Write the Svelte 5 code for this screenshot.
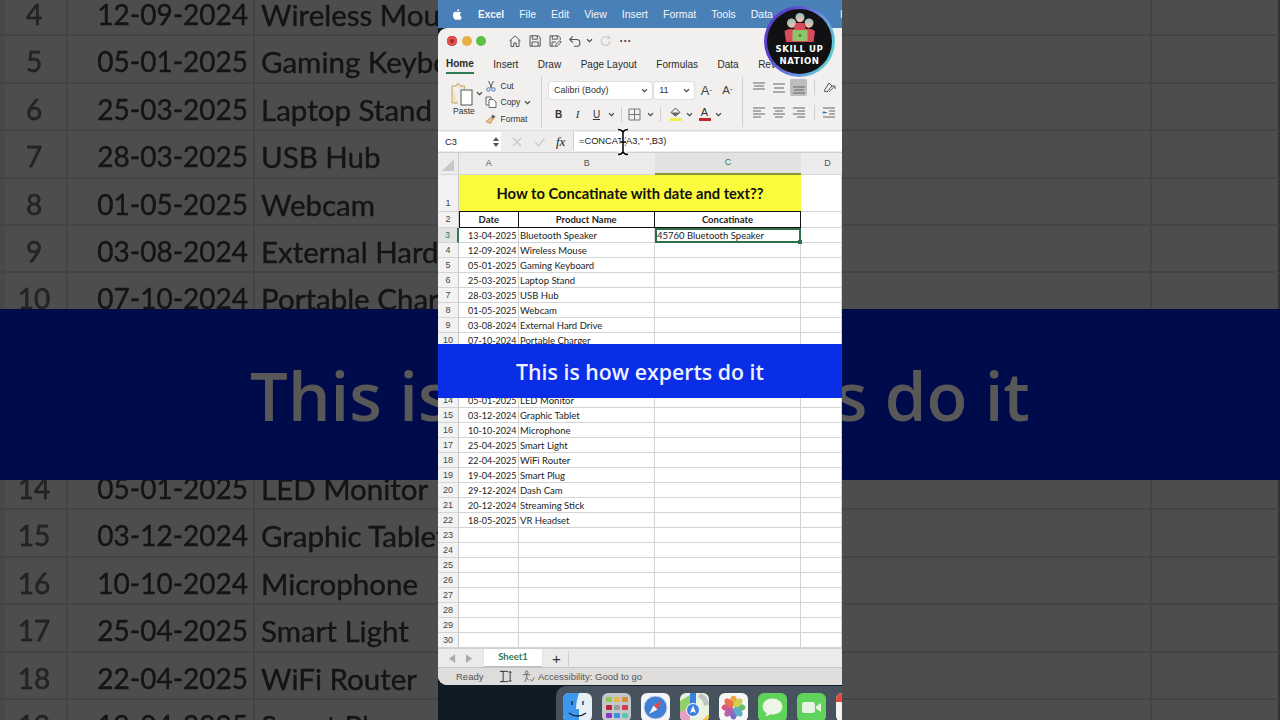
<script>
  const topRows = [
    [4, '12-09-2024', 'Wireless Mouse'],
    [5, '05-01-2025', 'Gaming Keyboard'],
    [6, '25-03-2025', 'Laptop Stand'],
    [7, '28-03-2025', 'USB Hub'],
    [8, '01-05-2025', 'Webcam'],
    [9, '03-08-2024', 'External Hard Drive'],
    [10, '07-10-2024', 'Portable Charger']
  ];
  const bottomRows = [
    [14, '05-01-2025', 'LED Monitor'],
    [15, '03-12-2024', 'Graphic Tablet'],
    [16, '10-10-2024', 'Microphone'],
    [17, '25-04-2025', 'Smart Light'],
    [18, '22-04-2025', 'WiFi Router'],
    [19, '19-04-2025', 'Smart Plug']
  ];
  const data = {
    3: ['13-04-2025', 'Bluetooth Speaker'],
    4: ['12-09-2024', 'Wireless Mouse'],
    5: ['05-01-2025', 'Gaming Keyboard'],
    6: ['25-03-2025', 'Laptop Stand'],
    7: ['28-03-2025', 'USB Hub'],
    8: ['01-05-2025', 'Webcam'],
    9: ['03-08-2024', 'External Hard Drive'],
    10: ['07-10-2024', 'Portable Charger'],
    14: ['05-01-2025', 'LED Monitor'],
    15: ['03-12-2024', 'Graphic Tablet'],
    16: ['10-10-2024', 'Microphone'],
    17: ['25-04-2025', 'Smart Light'],
    18: ['22-04-2025', 'WiFi Router'],
    19: ['19-04-2025', 'Smart Plug'],
    20: ['29-12-2024', 'Dash Cam'],
    21: ['20-12-2024', 'Streaming Stick'],
    22: ['18-05-2025', 'VR Headset']
  };
  const rowNums = Array.from({ length: 28 }, (_, i) => i + 3).filter((n) => n < 11 || n > 13);
  const hiddenRows = [11, 12, 13];
  const menu = ['File', 'Edit', 'View', 'Insert', 'Format', 'Tools', 'Data'];
  const tabs = ['Insert', 'Draw', 'Page Layout', 'Formulas', 'Data', 'Rev'];
</script>

{#snippet chevron()}
  <svg class="chev" viewBox="0 0 8 6" width="7" height="5"><path d="M1 1.5 4 4.5 7 1.5" fill="none" stroke="#444" stroke-width="1.3"/></svg>
{/snippet}

{#snippet alignLines(lines)}
  <svg viewBox="0 0 16 14" width="16" height="14">
    {#each lines as l}
      <path d={`M${l[0]} ${l[1]}H${l[2]}`} stroke="#666" stroke-width="1.1" fill="none"/>
    {/each}
  </svg>
{/snippet}

{#snippet sheetRow(n)}
  <div class="row">
    <div class="rh" class:rsel={n === 3}>{n}</div>
    <div class="cell date">{data[n] ? data[n][0] : ''}</div>
    <div class="cell">{data[n] ? data[n][1] : ''}</div>
    <div class="cell" class:active={n === 3}>{n === 3 ? '45760 Bluetooth Speaker' : ''}</div>
    <div class="cell"></div>
  </div>
{/snippet}

<div class="page">
  <div class="backdrop">
    <div class="bd-top">
      {#each topRows as r}
        <div class="bd-row">
          <span class="bd-num">{r[0]}</span>
          <span class="bd-date">{r[1]}</span>
          <span class="bd-name">{r[2]}</span>
          <span class="bd-c"></span>
          <span class="bd-d"></span>
        </div>
      {/each}
    </div>
    <div class="bd-banner"><span>This is how experts do it</span></div>
    <div class="bd-bottom">
      {#each bottomRows as r}
        <div class="bd-row">
          <span class="bd-num">{r[0]}</span>
          <span class="bd-date">{r[1]}</span>
          <span class="bd-name">{r[2]}</span>
          <span class="bd-c"></span>
          <span class="bd-d"></span>
        </div>
      {/each}
    </div>
  </div>

  <div class="video">
    <div class="menubar">
      <svg class="apple" viewBox="0 0 14 16" width="11" height="13"><path fill="#fff" d="M10.2 8.4c0-1.6 1.3-2.4 1.4-2.5-.8-1.1-2-1.3-2.4-1.3-1-.1-2 .6-2.5.6s-1.3-.6-2.2-.6C3.4 4.6 2.3 5.3 1.7 6.3.5 8.4 1.4 11.5 2.6 13.2c.6.8 1.3 1.8 2.2 1.8s1.2-.6 2.3-.6 1.4.6 2.3.6 1.5-.8 2.1-1.7c.7-1 .9-1.9 1-2-.1 0-2.300-.8-2.300-2.900ZM8.500 3.300c.5-.6.8-1.400.7-2.300-.7 0-1.600.5-2.100 1.100-.5.5-.9 1.400-.8 2.200.8.100 1.600-.4 2.200-1Z"/></svg>
      <b>Excel</b>
      {#each menu as m}<span>{m}</span>{/each}
      <span class="menu-h">H</span>
    </div>

    <div class="window">
      <div class="titlebar">
        <span class="light red"></span><span class="light amber"></span><span class="light green"></span>
        <div class="qat">
          <svg viewBox="0 0 14 14" width="14" height="14"><path d="M1.5 7 7 1.8 12.5 7M3 6v6.500h2.800V9h2.400v3.500H11V6" fill="none" stroke="#555" stroke-width="1"/></svg>
          <svg viewBox="0 0 14 14" width="14" height="14"><path d="M2 1.800h8.500l1.700 1.700v8.700H2zM4.300 2v3.200h5V2M4 12V8h6.200v4" fill="none" stroke="#555" stroke-width="1"/></svg>
          <svg viewBox="0 0 14 14" width="14" height="14"><path d="M6.500 12.200H2V1.800h8.300l1.900 1.900v2.500M4.300 2v3.200h5V2M4 12V8h4M7.500 12.500l.4-2 4-3.700 1.300 1.400-3.900 3.800z" fill="none" stroke="#555" stroke-width="1"/></svg>
          <svg viewBox="0 0 14 14" width="14" height="14"><path d="M2 5.500h6.500a3.300 3.300 0 0 1 0 6.800H6M4.800 2.300 1.700 5.500l3.100 3" fill="none" stroke="#555" stroke-width="1.100"/></svg>
          <span class="qat-chev">{@render chevron()}</span>
          <svg viewBox="0 0 14 14" width="13" height="13"><path d="M10.800 4.200A4.800 4.800 0 1 0 12 8M11.200 1.500v3h-3" fill="none" stroke="#c4c4c4" stroke-width="1.100"/></svg>
          <span class="dots">···</span>
        </div>
      </div>

      <div class="tabs">
        <span class="tab active">Home</span>
        {#each tabs as t}<span class="tab">{t}</span>{/each}
      </div>

      <div class="ribbon">
        <div class="group clip">
          <div class="paste">
            <div class="paste-top">
              <svg viewBox="0 0 24 25" width="24" height="25">
                <path d="M2 5h4l1-2h2.500l1 2h4v3M2 5v17h6" fill="#f1e3c4" stroke="#c6a86a" stroke-width="1"/>
                <rect x="11" y="9" width="11" height="15" fill="#fff" stroke="#555" stroke-width="1"/>
              </svg>
              {@render chevron()}
            </div>
            <span>Paste</span>
          </div>
          <div class="clip-list">
            <div class="clip-item">
              <svg viewBox="0 0 12 12" width="12" height="12"><path d="M3.500 1 7 8M8.500 1 5 8" stroke="#555" fill="none"/><circle cx="3.500" cy="9.500" r="1.700" fill="none" stroke="#3f78b5"/><circle cx="8.500" cy="9.500" r="1.700" fill="none" stroke="#3f78b5"/></svg>
              <span>Cut</span>
            </div>
            <div class="clip-item">
              <svg viewBox="0 0 12 12" width="12" height="12"><path d="M1 1h5v2M1 1v8h2.500M4 3.500h4.500L11 6v5.500H4z" fill="#fff" stroke="#555" stroke-width=".9"/></svg>
              <span>Copy</span>
              {@render chevron()}
            </div>
            <div class="clip-item">
              <svg viewBox="0 0 12 12" width="12" height="12"><path d="M7.500 1.500 10.500 3.500 8.500 6 6 4z" fill="#666"/><path d="M6 4.500 8 6 5.500 10.500 1 8.500z" fill="#eec28f" stroke="#c9853f" stroke-width=".8"/></svg>
              <span>Format</span>
            </div>
          </div>
        </div>
        <i class="sep tall"></i>
        <div class="group font">
          <div class="font-top">
            <div class="select font-name"><span>Calibri (Body)</span>{@render chevron()}</div>
            <div class="select font-size"><span>11</span>{@render chevron()}</div>
            <span class="grow">A<small>ˆ</small></span>
            <span class="shrink">A<small>ˇ</small></span>
          </div>
          <div class="font-bottom">
            <span class="fmt b">B</span>
            <span class="fmt i">I</span>
            <span class="fmt u">U</span>
            {@render chevron()}
            <i class="sep short"></i>
            <svg viewBox="0 0 13 13" width="13" height="13"><path d="M1 1h11v11H1zM6.500 1v11M1 6.500h11" fill="none" stroke="#777"/></svg>
            {@render chevron()}
            <i class="sep short"></i>
            <div class="colorbtn first">
              <svg viewBox="0 0 13 10" width="13" height="10"><path d="M6.500 1 11 5.500 6.500 9 2 5.500z" fill="none" stroke="#555"/><path d="M2 5.500h9L6.500 9z" fill="#666"/></svg>
              <u class="fill-y"></u>
            </div>
            {@render chevron()}
            <div class="colorbtn">
              <span class="a-red">A</span>
              <u class="fill-r"></u>
            </div>
            {@render chevron()}
          </div>
        </div>
        <i class="sep tall"></i>
        <div class="group align">
          <div class="align-row">
            <span class="al">{@render alignLines([[2, 2, 14], [3, 5, 13], [2, 8, 14]])}</span>
            <span class="al">{@render alignLines([[2, 3, 14], [3, 7, 13], [2, 11, 14]])}</span>
            <span class="al on">{@render alignLines([[2, 6, 14], [3, 9, 13], [2, 12, 14]])}</span>
            <i class="sep short"></i>
            <svg class="wrap" viewBox="0 0 16 14" width="16" height="14"><path d="M3 10 8 2l3 3-5 6zM14 5v3M14 5h-3" fill="none" stroke="#555"/><path d="M8 11l6-6" stroke="#3f78b5" fill="none"/></svg>
          </div>
          <div class="align-row">
            <span class="al">{@render alignLines([[2, 2, 14], [2, 5, 10], [2, 8, 14], [2, 11, 10]])}</span>
            <span class="al">{@render alignLines([[2, 2, 14], [4, 5, 12], [2, 8, 14], [4, 11, 12]])}</span>
            <span class="al">{@render alignLines([[2, 2, 14], [6, 5, 14], [2, 8, 14], [6, 11, 14]])}</span>
            <i class="sep short"></i>
            <svg class="wrap" viewBox="0 0 16 14" width="16" height="14"><path d="M2 2h12M8 5h6M8 8h6M2 11h12" stroke="#666" fill="none"/><path d="M6 6.500H2M3.500 5 2 6.500 3.500 8" stroke="#3f78b5" fill="none"/></svg>
          </div>
        </div>
      </div>

      <div class="formula">
        <div class="namebox"><span>C3</span><span class="stepper"><i></i><i class="dn"></i></span></div>
        <svg class="fx-x" viewBox="0 0 12 12" width="12" height="12"><path d="M2 2l8 8M10 2l-8 8" stroke="#c9c9c9" stroke-width="1.300"/></svg>
        <svg class="fx-v" viewBox="0 0 12 12" width="12" height="12"><path d="M1.500 6.500 4.500 10 10.500 2.500" fill="none" stroke="#c9c9c9" stroke-width="1.300"/></svg>
        <span class="fx">fx</span>
        <div class="fbox">=CONCAT(A3," ",B3)</div>
      </div>

      <div class="sheet">
        <div class="row colhead">
          <div class="corner"><svg viewBox="0 0 14 14" width="14" height="14"><path d="M13 1v12H1z" fill="#c9c9c9"/></svg></div>
          <div class="ch">A</div>
          <div class="ch">B</div>
          <div class="ch sel">C</div>
          <div class="ch chd">D</div>
        </div>
        <div class="row r1">
          <div class="rh">1</div>
          <div class="title">How to Concatinate with date and text??</div>
          <div class="cell"></div>
        </div>
        <div class="row r2">
          <div class="rh">2</div>
          <div class="th">Date</div>
          <div class="th">Product Name</div>
          <div class="th">Concatinate</div>
          <div class="cell"></div>
        </div>
        {#each rowNums.filter((n) => n < 11) as n}
          {@render sheetRow(n)}
        {/each}
        <div class="under-banner">
          {#each hiddenRows as n}
            <div class="row"><div class="rh"></div><div class="cell"></div><div class="cell"></div><div class="cell"></div><div class="cell"></div></div>
          {/each}
        </div>
        {#each rowNums.filter((n) => n > 13) as n}
          {@render sheetRow(n)}
        {/each}
      </div>

      <div class="sheetbar">
        <svg viewBox="0 0 8 10" width="7" height="9"><path d="M7 0v10L0 5z" fill="#aaa"/></svg>
        <svg viewBox="0 0 8 10" width="7" height="9"><path d="M0 0v10l7-5z" fill="#aaa"/></svg>
        <div class="sheettab">Sheet1</div>
        <span class="plus">+</span>
        <i class="sep bar"></i>
      </div>

      <div class="status">
        <span class="ready">Ready</span>
        <svg viewBox="0 0 14 14" width="13" height="13"><path d="M1 1.500h9M1 12.500h9M2.500 1.500h2v11h-2M12 1.500v11M10.500 3 12 1.500 13.500 3M10.500 11l1.500 1.500 1.500-1.500" fill="none" stroke="#333"/></svg>
        <svg class="acc" viewBox="0 0 14 14" width="13" height="13"><circle cx="5" cy="2.500" r="1.500" fill="none" stroke="#666"/><path d="M1 5h8M5 5v3l-2 5M5 8l2 3M9 10l1.500 2 3-4" fill="none" stroke="#666"/></svg>
        <span>Accessibility: Good to go</span>
      </div>
    </div>

    <div class="desktop">
      <div class="dock">
        <svg class="app" viewBox="0 0 29 29"><rect width="29" height="29" rx="6" fill="#e6eef6"/><path d="M6 0h10c-2 6-3 11-3 16h3v13H6a6 6 0 0 1-6-6V6a6 6 0 0 1 6-6Z" fill="#3e97ef"/><path d="M9 8v4M20 8v4M6 20c5 4 12 4 17 0" stroke="#1a2433" stroke-width="1.300" fill="none"/></svg>
        <svg class="app" viewBox="0 0 29 29"><rect width="29" height="29" rx="6" fill="#c4c7ca"/><rect x="4" y="4" width="6" height="5" rx="1" fill="#8bc75a"/><rect x="12" y="4" width="6" height="5" rx="1" fill="#e8b945"/><rect x="20" y="4" width="6" height="5" rx="1" fill="#d98a3a"/><rect x="4" y="12" width="6" height="5" rx="1" fill="#b8243a"/><rect x="12" y="12" width="6" height="5" rx="1" fill="#9a9da2"/><rect x="20" y="12" width="6" height="5" rx="1" fill="#d33d4a"/><rect x="4" y="20" width="6" height="5" rx="1" fill="#8a34c8"/><rect x="12" y="20" width="6" height="5" rx="1" fill="#3d8fe0"/><rect x="20" y="20" width="6" height="5" rx="1" fill="#5ac8b0"/></svg>
        <svg class="app" viewBox="0 0 29 29"><rect width="29" height="29" rx="6" fill="#f4f5f6"/><circle cx="14.500" cy="14.500" r="11.500" fill="#3f80d6" stroke="#cfd8e2"/><path d="M21 8 12.500 12.500 16.500 16.500z" fill="#e5493f"/><path d="M8 21 12.500 12.500 16.500 16.500z" fill="#f2f2f2"/></svg>
        <svg class="app" viewBox="0 0 29 29"><rect width="29" height="29" rx="6" fill="#e9f1df"/><path d="M0 8 10 2v27H6a6 6 0 0 1-6-6z" fill="#8fd16a"/><path d="M0 19l10-4v14H6a6 6 0 0 1-6-6z" fill="#e6a0c6"/><path d="M10 0h6v14h-6z" fill="#3d7fe0"/><path d="M20 0c6 2 9 7 9 12l-5 1c0-4-2-7-6-9z" fill="#bfc3c5"/><path d="M20 29l9-8v2a6 6 0 0 1-6 6z" fill="#f2c24a"/><circle cx="13" cy="17" r="6.500" fill="#3d7fe0" stroke="#fff"/><path d="M13 12.500 16 20l-3-1.500L10 20z" fill="#fff"/></svg>
        <svg class="app" viewBox="0 0 29 29"><rect width="29" height="29" rx="6" fill="#f6f6f6"/><g opacity=".92"><ellipse cx="14.500" cy="8" rx="3.500" ry="5.500" fill="#f0a030"/><ellipse cx="14.500" cy="21" rx="3.500" ry="5.500" fill="#6a62c4"/><ellipse cx="8" cy="14.500" rx="5.500" ry="3.500" fill="#d94a78"/><ellipse cx="21" cy="14.500" rx="5.500" ry="3.500" fill="#58b860"/><ellipse cx="10" cy="10" rx="5.500" ry="3.500" fill="#e46a40" transform="rotate(45 10 10)"/><ellipse cx="19" cy="10" rx="5.500" ry="3.500" fill="#c8cc48" transform="rotate(-45 19 10)"/><ellipse cx="10" cy="19" rx="5.500" ry="3.500" fill="#b450a8" transform="rotate(-45 10 19)"/><ellipse cx="19" cy="19" rx="5.500" ry="3.500" fill="#50a8c8" transform="rotate(45 19 19)"/></g></svg>
        <svg class="app" viewBox="0 0 29 29"><rect width="29" height="29" rx="6" fill="#5fd35c"/><ellipse cx="14.500" cy="13.500" rx="10" ry="8" fill="#eef5e6"/><path d="M9 18c0 3-1 4-2 5 3 0 5-1 6-3z" fill="#eef5e6"/></svg>
        <svg class="app" viewBox="0 0 29 29"><rect width="29" height="29" rx="6" fill="#5fd35c"/><rect x="5" y="9" width="13" height="11" rx="2.500" fill="#e8f2e0"/><path d="M19 13.500 24 10v9l-5-3.500z" fill="#e8f2e0"/></svg>
        <svg class="app" viewBox="0 0 29 29"><rect width="29" height="29" rx="6" fill="#f4f4f4"/><path d="M0 9V6a6 6 0 0 1 6-6h17a6 6 0 0 1 6 6v3z" fill="#e04a3f"/></svg>
      </div>
    </div>

    <div class="logo">
      <svg class="people" viewBox="0 0 34 31" width="34" height="31">
        <circle cx="8.500" cy="11" r="4.500" fill="#a9c4bf"/>
        <circle cx="17" cy="5.500" r="4.500" fill="#a9c4bf"/>
        <circle cx="26" cy="11" r="4.500" fill="#a9c4bf"/>
        <path d="M3 30 1.500 19q5-3 9-1.500L13 11h8l2 6q5-1 9 2l-1.500 11z" fill="#d94a5a"/>
        <circle cx="9" cy="13" r="2.700" fill="#efb9a8"/>
        <circle cx="17" cy="7.500" r="2.700" fill="#efb9a8"/>
        <circle cx="25.500" cy="13" r="2.700" fill="#efb9a8"/>
        <rect x="9.500" y="18" width="15" height="11" fill="#8ec46a"/>
        <circle cx="17" cy="23.500" r="1.300" fill="#3f7a3f"/>
      </svg>
      <span class="l1">SKILL UP</span>
      <span class="l2">NATION</span>
    </div>

    <svg class="ibeam" viewBox="0 0 14 28" width="14" height="28">
      <path d="M2 1.500c3 0 4 1 5 2.500 1-1.500 2-2.500 5-2.500M7 4v20M2 26.500c3 0 4-1 5-2.500 1 1.500 2 2.500 5 2.500M4 14h6" fill="none" stroke="#fff" stroke-width="3.500"/>
      <path d="M2 1.500c3 0 4 1 5 2.500 1-1.500 2-2.500 5-2.500M7 4v20M2 26.500c3 0 4-1 5-2.500 1 1.500 2 2.500 5 2.500M4 14h6" fill="none" stroke="#000" stroke-width="1.500"/>
    </svg>

    <div class="banner"><span>This is how experts do it</span></div>
  </div>
</div>

<style>
  :global(body) { margin: 0; background: #4d4d4d; }
  .page {
    position: relative;
    width: 1280px;
    height: 720px;
    overflow: hidden;
    display: flex;
    justify-content: center;
    background: #4d4d4d;
    font-family: "Liberation Sans", sans-serif;
  }

  .backdrop {
    position: absolute;
    inset: 0;
    display: flex;
    flex-direction: column;
    font-family: Lato, sans-serif;
    color: #141414;
    filter: blur(.6px);
  }
  .bd-top { height: 309px; overflow: hidden; flex: none; }
  .bd-top .bd-row:first-child { margin-top: -11px; }
  .bd-bottom { flex: 1; overflow: hidden; }
  .bd-bottom .bd-row:first-child { margin-top: -17px; }
  .bd-row {
    display: grid;
    grid-template-columns: 68px 187px 183px 714px 126px;
    height: 47.4px;
    box-sizing: border-box;
    border-bottom: 2px solid #444;
    border-right: 2px solid #333;
    font-size: 28px;
    line-height: 39px;
    box-shadow: inset 5px 0 0 #484848;
    -webkit-text-stroke: .4px #141414;
  }
  .bd-row span { padding-top: 6px; box-sizing: border-box; }
  .bd-num { text-align: center; color: #262626; padding-left: 2px; border-right: 2px solid #444; }
  .bd-date { text-align: right; padding-right: 5px; border-right: 2px solid #444; }
  .bd-name { padding-left: 6px; overflow: hidden; white-space: nowrap; font-size: 29.500px; }
  .bd-c { border-right: 2px solid #444; }
  .bd-banner {
    height: 171px;
    flex: none;
    background: #000b4b;
    display: flex;
    align-items: center;
    justify-content: center;
    font-family: "Open Sans", sans-serif;
    font-weight: 600;
    font-size: 67px;
    color: #585858;
    white-space: nowrap;
  }

  .video {
    position: relative;
    width: 404px;
    height: 720px;
    flex: none;
    overflow: hidden;
    display: flex;
    flex-direction: column;
    background: #0f1a22;
  }

  .menubar {
    height: 28px;
    flex: none;
    background: #4a80b8;
    color: #f2f6fa;
    display: flex;
    align-items: center;
    font-size: 10.500px;
    padding-left: 14px;
    gap: 15px;
    white-space: nowrap;
  }
  .menubar > * { flex: none; }
  .menubar b { font-weight: 700; font-size: 10px; }
  .menu-h { margin-left: 52px; }

  .window {
    flex: none;
    height: 657px;
    background: #f1f0ef;
    border-radius: 9px 0 0 9px;
    display: flex;
    flex-direction: column;
    overflow: hidden;
  }
  .titlebar {
    height: 25px;
    flex: none;
    display: flex;
    align-items: center;
    padding-left: 9px;
    gap: 4.5px;
  }
  .light { width: 10px; height: 10px; border-radius: 50%; flex: none; }
  .red { background: #d9403f; box-shadow: inset 0 0 0 3px #e0524c, inset 0 0 0 5px #9c2b2b; }
  .amber { background: #e8b044; }
  .green { background: #5cc046; }
  .qat { display: flex; align-items: center; gap: 6px; margin-left: 17px; }
  .qat-chev { display: flex; margin-left: -2px; }
  .dots { color: #444; font-size: 12px; font-weight: 700; margin-left: 2px; line-height: 10px; }

  .tabs {
    height: 21px;
    flex: none;
    display: flex;
    align-items: stretch;
    padding-left: 8px;
    gap: 19.5px;
    font-size: 10px;
    color: #2a2a2a;
    white-space: nowrap;
  }
  .tab { display: flex; align-items: center; padding-top: 1px; box-sizing: border-box; }
  .tab.active { font-weight: 700; border-bottom: 2px solid #2f7a52; }

  .ribbon {
    height: 57px;
    flex: none;
    display: flex;
    align-items: center;
    border-bottom: 1px solid #dcdcdc;
    box-sizing: border-box;
    color: #333;
  }
  .sep { display: block; background: #cfcfcf; width: 1px; flex: none; }
  .sep.tall { height: 50px; }
  .sep.short { height: 15px; }
  .group { flex: none; height: 100%; }
  .clip { width: 103px; display: flex; padding-left: 12px; box-sizing: border-box; gap: 3px; }
  .paste { display: flex; flex-direction: column; align-items: flex-start; padding-top: 7px; font-size: 8.500px; }
  .paste-top { display: flex; align-items: center; gap: 2px; height: 25px; }
  .paste span { margin-left: 3px; line-height: 11px; }
  .clip-list { display: flex; flex-direction: column; padding-top: 5px; gap: 3.500px; margin-left: -1px; }
  .clip-item { display: flex; align-items: center; gap: 3.500px; height: 13px; font-size: 8.500px; white-space: nowrap; }

  .font { width: 200px; padding-left: 7px; box-sizing: border-box; display: flex; flex-direction: column; gap: 6px; padding-top: 7px; }
  .font-top { display: flex; align-items: center; height: 18px; gap: 2px; }
  .select {
    height: 17px;
    background: #fff;
    border-radius: 3px;
    box-shadow: 0 0 0 1px #dedede;
    display: flex;
    align-items: center;
    justify-content: space-between;
    padding: 0 4px 0 5px;
    box-sizing: border-box;
    font-size: 9px;
  }
  .font-name { width: 105px; }
  .font-size { width: 40px; margin-right: 5px; }
  .grow, .shrink { font-size: 13px; color: #444; width: 20px; text-align: left; white-space: nowrap; }
  .shrink { font-size: 11.500px; }
  .grow small, .shrink small { font-size: 8px; }
  .font-bottom { display: flex; align-items: center; height: 18px; gap: 6px; padding-left: 3px; }
  .fmt { font-family: "Liberation Serif", serif; font-size: 11px; width: 13px; text-align: center; color: #333; }
  .fmt.b { font-family: "Liberation Sans", sans-serif; font-weight: 700; font-size: 10px; }
  .fmt.i { font-style: italic; }
  .fmt.u { font-family: "Liberation Sans", sans-serif; font-size: 10px; text-decoration: underline; margin-right: -1px; }
  .colorbtn { display: flex; flex-direction: column; align-items: center; width: 12px; margin-right: -2px; }
  .colorbtn.first { margin-left: 2.500px; }
  .colorbtn u { display: block; height: 3px; width: 12px; flex: none; }
  .fill-y { background: #f1ee4b; margin-top: 1px; }
  .fill-r { background: #c1272d; }
  .a-red { font-size: 11px; line-height: 11px; color: #333; }

  .align { flex: 1; padding-left: 7px; display: flex; flex-direction: column; gap: 6px; padding-top: 8px; }
  .align-row { display: flex; align-items: center; height: 19px; gap: 3px; }
  .al { width: 17px; height: 17px; display: flex; align-items: center; justify-content: center; border-radius: 2px; }
  .al.on { background: #bdbdbd; }
  .wrap { margin-left: 3px; flex: none; }
  .align-row .sep { margin-left: 4px; }

  .formula {
    height: 22px;
    flex: none;
    display: flex;
    align-items: flex-start;
    padding-top: 1px;
    box-sizing: border-box;
    border-bottom: 1px solid #cfcfcf;
    font-size: 9.300px;
    color: #222;
    background: #ededed;
  }
  .formula svg { margin-top: 4px; }
  .namebox {
    width: 63px;
    height: 19px;
    background: #fff;
    display: flex;
    align-items: center;
    justify-content: space-between;
    padding: 0 2px 0 7px;
    box-sizing: border-box;
    flex: none;
  }
  .stepper { display: flex; flex-direction: column; gap: 2px; }
  .stepper i { display: block; width: 0; height: 0; border: 3px solid transparent; border-top: 0; border-bottom: 4px solid #555; }
  .stepper i.dn { border-bottom: 0; border-top: 4px solid #555; }
  .fx-x { margin-left: 10px; }
  .fx-v { margin-left: 11px; }
  .fx { font-family: "Liberation Serif", serif; font-style: italic; font-size: 13px; margin-left: 10px; width: 17px; line-height: 19px; }
  .fbox {
    flex: 1;
    height: 19px;
    background: #fff;
    border-left: 1px solid #ccc;
    padding-left: 5px;
    line-height: 19px;
    white-space: pre;
  }

  .sheet { flex: none; height: 495px; background: #fff; font-family: Lato, sans-serif; font-size: 9.500px; color: #222; overflow: hidden; }
  .row {
    display: grid;
    grid-template-columns: 21px 59.500px 136.500px 146px 1fr;
    grid-template-rows: 100%;
    height: 15px;
    box-sizing: border-box;
    line-height: 15.500px;
  }
  .colhead { height: 22px; background: #ececec; border-bottom: 1px solid #d6d6d6; }
  .corner { display: flex; justify-content: center; align-items: center; padding-top: 2px; background: #ececec; border-right: 1px solid #ccc; }
  .ch { display: flex; align-items: center; justify-content: center; box-sizing: border-box; font-family: "Liberation Sans", sans-serif; font-size: 9px; color: #555; }
  .chd { padding-left: 12px; }
  .ch.sel { background: #e2e2e2; border-bottom: 2px solid #83973b; color: #2f7a52; height: 22px; }
  .rh {
    background: #f2f2f2;
    text-align: center;
    border-right: 1px solid #c8c8c8;
    border-bottom: 1px solid #d4d4d4;
    color: #444;
    font-family: "Liberation Sans", sans-serif;
    font-size: 9px;
    overflow: hidden;
  }
  .rsel { background: #e2e2e2; color: #2f7a52; border-right: 2px solid #2f7a52; }
  .cell {
    border-right: 1px solid #d4d4d4;
    border-bottom: 1px solid #d4d4d4;
    padding-left: 1.500px;
    white-space: nowrap;
    overflow: hidden;
    box-sizing: border-box;
  }
  .date { text-align: right; padding-right: 1px; font-size: 9px; }
  .cell.active {
    position: relative;
    border: 2px solid #2f6f47;
    line-height: 12px;
    overflow: visible;
    padding-left: 0;
  }
  .cell.active::after {
    content: '';
    position: absolute;
    right: -3px;
    bottom: -3px;
    width: 4px;
    height: 4px;
    background: #2f6f47;
  }
  .r1 { height: 37px; }
  .r1 .rh { display: flex; align-items: flex-end; justify-content: center; }
  .title {
    grid-column: 2 / 5;
    background: #fbfb3d;
    font-weight: 700;
    font-size: 14.700px;
    color: #111;
    text-align: center;
    line-height: 37px;
    border-bottom: 1px solid #111;
    overflow: hidden;
  }
  .r2 { height: 16px; }
  .th {
    text-align: center;
    font-weight: 700;
    border-right: 1px solid #111;
    border-bottom: 1px solid #111;
    line-height: 16px;
    overflow: hidden;
  }
  .r2 .th:nth-child(2) { border-left: 1px solid #111; }

  .sheetbar {
    height: 19px;
    flex: none;
    background: #ebebeb;
    border-top: 1px solid #cfcfcf;
    box-sizing: border-box;
    display: flex;
    align-items: center;
    padding-left: 11px;
    gap: 10px;
  }
  .sheettab {
    width: 58px;
    height: 17px;
    background: #fff;
    color: #2f7a52;
    font-size: 9.500px;
    font-weight: 700;
    text-align: center;
    line-height: 16px;
    margin-left: 1px;
    margin-top: -2px;
    box-shadow: 0 1px 1px #bbb;
    font-family: Lato, sans-serif;
  }
  .plus { color: #333; font-size: 15px; line-height: 15px; }
  .sep.bar { height: 15px; margin-left: -3px; }

  .status {
    height: 18px;
    flex: none;
    background: #dedddc;
    border-top: 1px solid #c6c6c6;
    box-sizing: border-box;
    display: flex;
    align-items: center;
    font-size: 9.500px;
    color: #555;
    padding-left: 18px;
    gap: 3px;
  }
  .ready { width: 40px; }
  .acc { margin-left: 7px; }

  .desktop { flex: 1; display: flex; justify-content: flex-end; align-items: flex-end; }
  .dock {
    width: 286px;
    height: 34px;
    background: #46525e;
    border-radius: 10px 0 0 0;
    display: flex;
    gap: 10px;
    padding: 7px 0 0 7px;
    box-sizing: border-box;
    overflow: hidden;
    flex: none;
  }
  .app { width: 29px; height: 29px; flex: none; }

  .logo {
    position: absolute;
    left: 326px;
    top: 6px;
    width: 71px;
    height: 71px;
    border-radius: 50%;
    border: 3px solid transparent;
    background: linear-gradient(#111114, #111114) padding-box, linear-gradient(115deg, #5a3fc8 25%, #6a8fe0 60%, #5cd6d0 90%) border-box;
    box-sizing: border-box;
    display: flex;
    flex-direction: column;
    align-items: center;
    color: #fff;
    font-family: "DejaVu Sans Condensed", "DejaVu Sans", sans-serif;
    font-weight: 700;
    overflow: hidden;
    white-space: nowrap;
  }
  .people { margin-top: 3px; flex: none; }
  .l1 { font-size: 9.500px; line-height: 11px; letter-spacing: .6px; }
  .l2 { font-size: 9.500px; line-height: 13px; letter-spacing: .6px; }

  .ibeam { position: absolute; left: 178px; top: 128px; }

  .banner {
    position: absolute;
    left: 0;
    right: 0;
    top: 344px;
    height: 54px;
    background: #0a2ee6;
    color: #eef0ff;
    display: flex;
    align-items: center;
    justify-content: center;
    font-family: "Open Sans", sans-serif;
    font-weight: 600;
    font-size: 21.300px;
    white-space: nowrap;
  }
</style>
